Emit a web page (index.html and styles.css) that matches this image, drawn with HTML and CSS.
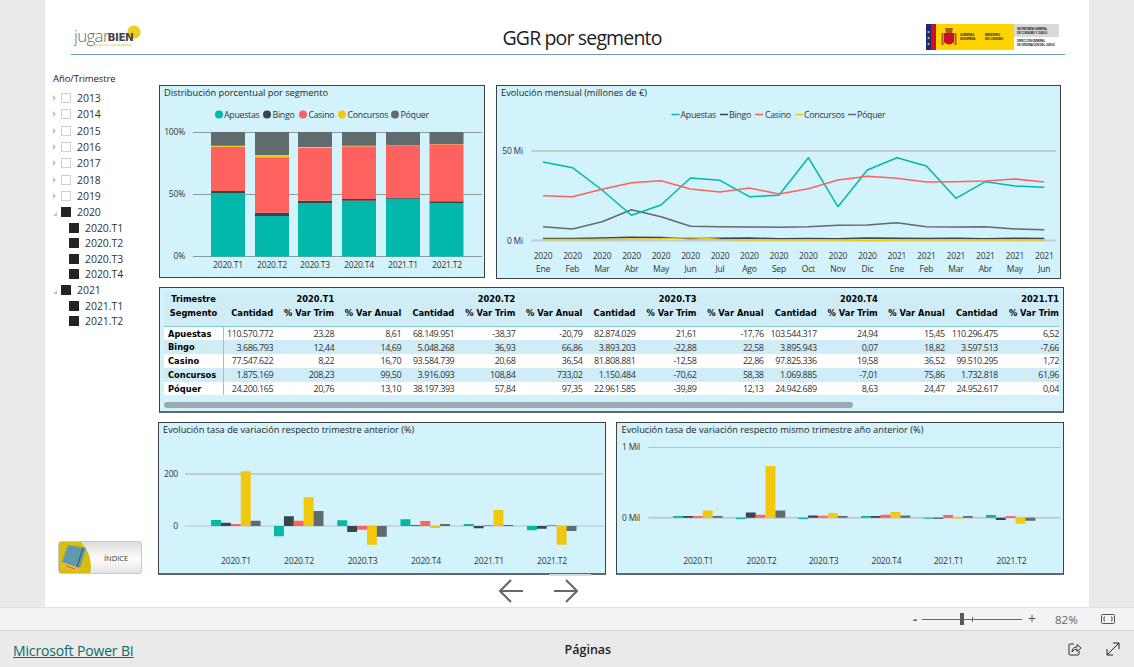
FILE: index.html
```html
<!DOCTYPE html>
<html lang="es">
<head>
<meta charset="utf-8">
<title>GGR por segmento</title>
<link rel="stylesheet" href="styles.css">
</head>
<body>
<main class="stage">
  <section class="report">
    <header class="report-head">
      <svg class="logo" viewBox="74 22 72 26" width="72" height="26" role="img" aria-label="jugarBIEN">
        <circle class="logo-dot" cx="134" cy="32" r="6.6"/>
        <text class="logo-thin" x="74" y="42">jugar</text>
        <text class="logo-bold" x="107.500" y="41">BIEN</text>
        <text class="logo-sub" x="95" y="46">juega con responsabilidad</text>
      </svg>
      <h1 class="report-title">GGR por segmento</h1>
      <svg class="gov" viewBox="926 24 133 26" width="133" height="26" role="img" aria-label="Gobierno de España">
        <rect class="gov-yellow" x="926" y="24" width="88" height="26"/>
        <rect class="gov-blue" x="926" y="24" width="5" height="26"/>
        <rect class="gov-red" x="931" y="24" width="5" height="26"/>
        <circle class="gov-star" cx="928.500" cy="32" r="1"/><circle class="gov-star" cx="928.500" cy="38" r="1"/><circle class="gov-star" cx="928.500" cy="44" r="1"/>
        <rect class="gov-grey" x="1014" y="24" width="45" height="13"/>
        <path class="gov-red" d="M944 33h10v9q-5 5-10 0z"/>
        <path class="gov-crown" d="M945 28h8l-1 5h-6zM941.500 33h2v12h-2zM954.500 33h2v12h-2z"/>
        <text class="gov-t" x="960" y="36">GOBIERNO</text><text class="gov-t" x="960" y="39.500">DE ESPAÑA</text>
        <text class="gov-t" x="985" y="36">MINISTERIO</text><text class="gov-t" x="985" y="39.500">DE CONSUMO</text>
        <text class="gov-t" x="1017" y="30">SECRETARÍA GENERAL</text><text class="gov-t" x="1017" y="33.500">DE CONSUMO Y JUEGO</text>
        <text class="gov-t" x="1017" y="42">DIRECCIÓN GENERAL</text><text class="gov-t" x="1017" y="45.500">DE ORDENACIÓN DEL JUEGO</text>
      </svg>
    </header>

    <div class="report-body">
      <aside class="side">
        <div class="slicer-title">Año/Trimestre</div>
        <ul class="slicer">
          <li class="year"><i class="caret"></i><i class="check"></i>2013</li>
          <li class="year"><i class="caret"></i><i class="check"></i>2014</li>
          <li class="year"><i class="caret"></i><i class="check"></i>2015</li>
          <li class="year"><i class="caret"></i><i class="check"></i>2016</li>
          <li class="year"><i class="caret"></i><i class="check"></i>2017</li>
          <li class="year"><i class="caret"></i><i class="check"></i>2018</li>
          <li class="year"><i class="caret"></i><i class="check"></i>2019</li>
          <li class="year"><i class="caret open"></i><i class="check on"></i>2020</li>
          <li class="quarter"><i class="check on"></i>2020.T1</li>
          <li class="quarter"><i class="check on"></i>2020.T2</li>
          <li class="quarter"><i class="check on"></i>2020.T3</li>
          <li class="quarter"><i class="check on"></i>2020.T4</li>
          <li class="year"><i class="caret open"></i><i class="check on"></i>2021</li>
          <li class="quarter"><i class="check on"></i>2021.T1</li>
          <li class="quarter"><i class="check on"></i>2021.T2</li>
        </ul>
        <button class="index-btn" type="button">
          <svg class="book" viewBox="0 0 36 32" width="36" height="32" aria-hidden="true">
            <path class="book-bg" d="M2 0h20q13 14 9 32H2q-2 0-2-2V2q0-2 2-2z"/>
            <path class="book-band" d="M3 20l18 6-1 5L2 25z"/>
            <path class="book-cover" d="M9 3l18 3-6 20-18-6z"/>
            <path class="book-spine" d="M24 6l-6 19"/>
            <path class="book-line" d="M7 24l9 3"/>
          </svg>
          <span class="index-label">ÍNDICE</span>
        </button>
      </aside>

      <div class="main">
        <div class="row-top">
          <figure class="panel panel-dist">
            <svg class="chart" viewBox="160 86 324 191">
              <text class="ttl" x="164" y="96">Distribución porcentual por segmento</text>
              <circle class="f-teal" cx="219" cy="114.500" r="4"/><text class="lbl" x="224" y="118">Apuestas</text>
              <circle class="f-dark" cx="267" cy="114.500" r="4"/><text class="lbl" x="272.500" y="118">Bingo</text>
              <circle class="f-red" cx="303" cy="114.500" r="4"/><text class="lbl" x="308.500" y="118">Casino</text>
              <circle class="f-yellow" cx="342" cy="114.500" r="4"/><text class="lbl" x="347.500" y="118">Concursos</text>
              <circle class="f-grey" cx="395" cy="114.500" r="4"/><text class="lbl" x="400.500" y="118">Póquer</text>
              <path class="grid" d="M193 132.500H482M193 194.500H482M193 256.500H482"/>
              <text class="axis end" x="185" y="135">100%</text>
              <text class="axis end" x="185" y="197">50%</text>
              <text class="axis end" x="185" y="259">0%</text>
              <path class="f-teal" d="M211 193h34v63.500h-34zM255 216h34v40.500h-34zM298 203h34v53.500h-34zM342 200.700h34v55.800h-34zM386 198.700h34v57.800h-34zM429.500 203h34v53.500h-34z"/>
              <path class="f-dark" d="M211 191h34v2h-34zM255 212.700h34v3.300h-34zM298 200.700h34v2.300h-34zM342 199h34v1.700h-34zM386 197.500h34v1.200h-34zM429.500 201.300h34v1.700h-34z"/>
              <path class="f-red" d="M211 146.700h34v44.300h-34zM255 157.300h34v55.400h-34zM298 147.700h34v53h-34zM342 146.300h34v52.700h-34zM386 146h34v51.500h-34zM429.500 144.300h34v57h-34z"/>
              <path class="f-yellow" d="M211 145.700h34v1h-34zM255 155h34v2.300h-34zM298 147h34v.7h-34zM342 145.700h34v.6h-34zM386 145.400h34v.6h-34zM429.500 144h34v.3h-34z"/>
              <path class="f-grey" d="M211 132h34v13.700h-34zM255 132h34v23h-34zM298 132h34v15h-34zM342 132h34v13.700h-34zM386 132h34v13.400h-34zM429.500 132h34v12h-34z"/>
              <text class="axis mid" x="228" y="268">2020.T1</text>
              <text class="axis mid" x="272" y="268">2020.T2</text>
              <text class="axis mid" x="315" y="268">2020.T3</text>
              <text class="axis mid" x="359" y="268">2020.T4</text>
              <text class="axis mid" x="403" y="268">2021.T1</text>
              <text class="axis mid" x="447" y="268">2021.T2</text>
            </svg>
          </figure>

          <figure class="panel panel-line">
            <svg class="chart" viewBox="497 86 563 192">
              <text class="ttl" x="501" y="96">Evolución mensual (millones de €)</text>
              <path class="l-teal" d="M671.500 114.500h8"/><text class="lbl" x="680.500" y="118">Apuestas</text>
              <path class="l-dark" d="M720 114.500h8"/><text class="lbl" x="729" y="118">Bingo</text>
              <path class="l-red" d="M755 114.500h8"/><text class="lbl" x="765" y="118">Casino</text>
              <path class="l-yellow" d="M795 114.500h8"/><text class="lbl" x="804" y="118">Concursos</text>
              <path class="l-grey" d="M848 114.500h8"/><text class="lbl" x="857" y="118">Póquer</text>
              <path class="grid-soft" d="M531 151H1056M531 240.500H1056"/>
              <text class="axis end" x="523" y="154">50 Mi</text>
              <text class="axis end" x="523" y="244">0 Mi</text>
              <polyline class="l-dark" points="543,238.500 572.500,238.500 602,238 631.500,237.300 661,237.500 690.500,238.500 720,238.300 749.400,238 778.900,238.800 808.400,238.500 837.900,238.800 867.400,238 896.900,238.200 926.400,238.500 955.900,238.300 985.400,238.700 1014.800,238.300 1044.300,238.600"/>
              <polyline class="l-yellow" points="543,239.500 572.500,239.500 602,239.500 631.500,239 661,238.800 690.500,237.500 720,239.500 749.400,240 778.900,240 808.400,240 837.900,240 867.400,240.500 896.900,240 926.400,240 955.900,240 985.400,240 1014.800,240 1044.300,240"/>
              <polyline class="l-grey" points="543,226.700 572.500,229 602,221.700 631.500,209.700 661,216.700 690.500,226.300 720,226.700 749.400,227 778.900,227.200 808.400,226.700 837.900,225.300 867.400,225 896.900,222.700 926.400,226.700 955.900,227 985.400,226.700 1014.800,229 1044.300,229.700"/>
              <polyline class="l-teal" points="543,162 572.500,167.700 602,190 631.500,215.300 661,205 690.500,178 720,180.300 749.400,196.700 778.900,195.300 808.400,157.700 837.900,206.700 867.400,170 896.900,157.700 926.400,166 955.900,198.300 985.400,181.700 1014.800,186 1044.300,187.300"/>
              <polyline class="l-red" points="543,195.700 572.500,196.700 602,189.300 631.500,182.700 661,180.700 690.500,189 720,192 749.400,188 778.900,194 808.400,188.700 837.900,180 867.400,176.300 896.900,178.300 926.400,182 955.900,181.700 985.400,181 1014.800,179 1044.300,182"/>
              <g class="axis mid">
                <text x="543" y="259">2020</text><text x="543" y="272">Ene</text>
                <text x="572.500" y="259">2020</text><text x="572.500" y="272">Feb</text>
                <text x="602" y="259">2020</text><text x="602" y="272">Mar</text>
                <text x="631.500" y="259">2020</text><text x="631.500" y="272">Abr</text>
                <text x="661" y="259">2020</text><text x="661" y="272">May</text>
                <text x="690.500" y="259">2020</text><text x="690.500" y="272">Jun</text>
                <text x="720" y="259">2020</text><text x="720" y="272">Jul</text>
                <text x="749.400" y="259">2020</text><text x="749.400" y="272">Ago</text>
                <text x="778.900" y="259">2020</text><text x="778.900" y="272">Sep</text>
                <text x="808.400" y="259">2020</text><text x="808.400" y="272">Oct</text>
                <text x="837.900" y="259">2020</text><text x="837.900" y="272">Nov</text>
                <text x="867.400" y="259">2020</text><text x="867.400" y="272">Dic</text>
                <text x="896.900" y="259">2021</text><text x="896.900" y="272">Ene</text>
                <text x="926.400" y="259">2021</text><text x="926.400" y="272">Feb</text>
                <text x="955.900" y="259">2021</text><text x="955.900" y="272">Mar</text>
                <text x="985.400" y="259">2021</text><text x="985.400" y="272">Abr</text>
                <text x="1014.800" y="259">2021</text><text x="1014.800" y="272">May</text>
                <text x="1044.300" y="259">2021</text><text x="1044.300" y="272">Jun</text>
              </g>
            </svg>
          </figure>
        </div>

        <div class="panel panel-table">
          <div class="table-clip">
            <table class="matrix">
              <colgroup>
                <col class="c-head"><col class="c1"><col class="c2"><col class="c3"><col class="c4"><col class="c5"><col class="c6"><col class="c7"><col class="c8"><col class="c9"><col class="c10"><col class="c11"><col class="c12"><col class="c13"><col class="c14">
              </colgroup>
              <thead>
                <tr class="hr1"><th class="corner">Trimestre</th><th></th><th>2020.T1</th><th></th><th></th><th>2020.T2</th><th></th><th></th><th>2020.T3</th><th></th><th></th><th>2020.T4</th><th></th><th></th><th>2021.T1</th></tr>
                <tr class="hr2"><th class="corner">Segmento</th><th>Cantidad</th><th>% Var Trim</th><th>% Var Anual</th><th>Cantidad</th><th>% Var Trim</th><th>% Var Anual</th><th>Cantidad</th><th>% Var Trim</th><th>% Var Anual</th><th>Cantidad</th><th>% Var Trim</th><th>% Var Anual</th><th>Cantidad</th><th>% Var Trim</th></tr>
              </thead>
              <tbody>
                <tr><th>Apuestas</th><td>110.570.772</td><td>23,28</td><td>8,61</td><td>68.149.951</td><td>-38,37</td><td>-20,79</td><td>82.874.029</td><td>21,61</td><td>-17,76</td><td>103.544.317</td><td>24,94</td><td>15,45</td><td>110.296.475</td><td>6,52</td></tr>
                <tr><th>Bingo</th><td>3.686.793</td><td>12,44</td><td>14,69</td><td>5.048.268</td><td>36,93</td><td>66,86</td><td>3.893.203</td><td>-22,88</td><td>22,58</td><td>3.895.943</td><td>0,07</td><td>18,82</td><td>3.597.513</td><td>-7,66</td></tr>
                <tr><th>Casino</th><td>77.547.622</td><td>8,22</td><td>16,70</td><td>93.584.739</td><td>20,68</td><td>36,54</td><td>81.808.881</td><td>-12,58</td><td>22,86</td><td>97.825.336</td><td>19,58</td><td>36,52</td><td>99.510.295</td><td>1,72</td></tr>
                <tr><th>Concursos</th><td>1.875.169</td><td>208,23</td><td>99,50</td><td>3.916.093</td><td>108,84</td><td>733,02</td><td>1.150.484</td><td>-70,62</td><td>58,38</td><td>1.069.885</td><td>-7,01</td><td>75,86</td><td>1.732.818</td><td>61,96</td></tr>
                <tr><th>Póquer</th><td>24.200.165</td><td>20,76</td><td>13,10</td><td>38.197.393</td><td>57,84</td><td>97,35</td><td>22.961.585</td><td>-39,89</td><td>12,13</td><td>24.942.689</td><td>8,63</td><td>24,47</td><td>24.952.617</td><td>0,04</td></tr>
              </tbody>
            </table>
          </div>
          <div class="scroll-track"><div class="scroll-thumb"></div></div>
        </div>

        <div class="row-bottom">
          <figure class="panel panel-bar">
            <svg class="chart" viewBox="159 423 446 150">
              <text class="ttl" x="163" y="433">Evolución tasa de variación respecto trimestre anterior (%)</text>
              <path class="grid-soft" d="M185 474H603"/>
              <path class="grid-thin" d="M185 526H603"/>
              <text class="axis end" x="178" y="477">200</text>
              <text class="axis end" x="178" y="529">0</text>
              <path class="f-teal" d="M211.100 520h9.900v6h-9.900zM274 526h9.900v10.300h-9.900zM337.300 520.300h9.900v5.700h-9.900zM400.500 519.300h9.900v6.700h-9.900zM463.800 524h9.900v2h-9.900zM527 526h9.900v4.300h-9.900z"/>
              <path class="f-dark" d="M221 522.700h9.900v3.300h-9.900zM283.900 516.300h9.900v9.700h-9.900zM347.200 526h9.900v6h-9.900zM410.400 525.300h9.900v.7h-9.900zM473.700 526h9.900v2.300h-9.900zM536.900 526h9.900v2.700h-9.900z"/>
              <path class="f-red" d="M230.900 524h9.900v2h-9.900zM293.800 520.700h9.900v5.300h-9.900zM357.100 526h9.900v3.700h-9.900zM420.300 521h9.900v5h-9.900zM483.600 525h9.900v1h-9.900zM546.800 525h9.900v1h-9.900z"/>
              <path class="f-yellow" d="M240.800 471.300h9.900v54.700h-9.900zM303.700 497.300h9.900v28.700h-9.900zM367 526h9.900v18.700h-9.900zM430.200 526h9.900v2h-9.900zM493.500 510h9.900v16h-9.900zM556.700 526h9.900v18.700h-9.900z"/>
              <path class="f-grey" d="M250.700 520.700h9.900v5.300h-9.900zM313.600 511h9.900v15h-9.900zM376.900 526h9.900v10.700h-9.900zM440.100 524h9.900v2h-9.900zM503.400 525h9.900v1h-9.900zM566.600 526h9.900v5h-9.900z"/>
              <text class="axis mid" x="236" y="564">2020.T1</text>
              <text class="axis mid" x="299" y="564">2020.T2</text>
              <text class="axis mid" x="362.600" y="564">2020.T3</text>
              <text class="axis mid" x="426" y="564">2020.T4</text>
              <text class="axis mid" x="489" y="564">2021.T1</text>
              <text class="axis mid" x="552" y="564">2021.T2</text>
            </svg>
          </figure>
          <figure class="panel panel-bar">
            <svg class="chart" viewBox="617 423 446 150">
              <text class="ttl" x="621.500" y="433">Evolución tasa de variación respecto mismo trimestre año anterior (%)</text>
              <path class="grid-thin" d="M648.400 447.500H1061"/>
              <path class="grid-soft" d="M648.400 517.700H1061"/>
              <text class="axis" x="622" y="450">1 Mil</text>
              <text class="axis" x="622" y="521">0 Mil</text>
              <path class="f-teal" d="M673.200 516h9.860v1.700h-9.860zM736 517.700h9.860v1.300h-9.860zM798.200 517.700h9.860v1.300h-9.860zM861 516h9.860v1.700h-9.860zM923.500 517.700h9.860v1h-9.860zM986 515h9.860v2.700h-9.860z"/>
              <path class="f-dark" d="M683.060 516h9.860v1.700h-9.860zM745.860 512.400h9.860v5.300h-9.860zM808.060 515.400h9.860v2.300h-9.860zM870.860 516h9.860v1.700h-9.860zM933.360 517.700h9.860v1h-9.860zM995.860 517.700h9.860v2.300h-9.860z"/>
              <path class="f-red" d="M692.920 516h9.860v1.700h-9.860zM755.720 514.700h9.860v3h-9.860zM817.920 515.700h9.860v2h-9.860zM880.720 514.700h9.860v3h-9.860zM943.220 515h9.860v2.700h-9.860zM1005.720 516h9.860v1.700h-9.860z"/>
              <path class="f-yellow" d="M702.780 510.400h9.860v7.300h-9.860zM765.580 466h9.860v51.700h-9.860zM827.780 513h9.860v4.700h-9.860zM890.580 512h9.860v5.700h-9.860zM953.080 517.700h9.860v1h-9.860zM1015.580 517.700h9.860v6h-9.860z"/>
              <path class="f-grey" d="M712.640 516h9.860v1.700h-9.860zM775.440 510.400h9.860v7.300h-9.860zM837.640 516h9.860v1.700h-9.860zM900.440 515.400h9.860v2.300h-9.860zM962.940 516h9.860v1.700h-9.860zM1025.440 517.700h9.860v3h-9.860z"/>
              <text class="axis mid" x="698.200" y="564">2020.T1</text>
              <text class="axis mid" x="761.400" y="564">2020.T2</text>
              <text class="axis mid" x="823.600" y="564">2020.T3</text>
              <text class="axis mid" x="886.400" y="564">2020.T4</text>
              <text class="axis mid" x="948.600" y="564">2021.T1</text>
              <text class="axis mid" x="1011.400" y="564">2021.T2</text>
            </svg>
          </figure>
        </div>

        <nav class="pager">
          <svg class="arrow" viewBox="0 0 24 24" width="24" height="24" aria-label="Anterior"><path d="M24 12H1M12 1L1 12l11 11"/></svg>
          <svg class="arrow" viewBox="0 0 24 24" width="24" height="24" aria-label="Siguiente"><path d="M0 12h23M12 1l11 11-11 11"/></svg>
        </nav>
      </div>
    </div>
  </section>
</main>

<div class="zoombar">
  <span class="zoom-sign">-</span>
  <span class="zoom-track"><i class="zoom-handle"></i><i class="zoom-tick"></i></span>
  <span class="zoom-sign plus">+</span>
  <span class="zoom-value">82%</span>
  <svg class="fit" viewBox="0 0 14 10" width="14" height="10" aria-hidden="true"><rect x=".5" y=".5" width="13" height="9" rx="1"/><path d="M4 3H3v4h1M10 3h1v4h-1"/></svg>
</div>

<footer class="footer">
  <a class="brand" href="#">Microsoft Power BI</a>
  <span class="pages">Páginas</span>
  <span class="foot-icons">
    <svg class="foot-icon" viewBox="0 0 14 14" width="14" height="14" aria-hidden="true"><path d="M6 2H2q-1 0-1 1v9q0 1 1 1h8q1 0 1-1V9"/><path d="M4 10q0-5 5-5V2.500L13 6 9 9.500V7q-3 0-5 3z"/></svg>
    <svg class="foot-icon dark" viewBox="0 0 14 14" width="14" height="14" aria-hidden="true"><path d="M1 13L13 1M7 1h6v6M1 7v6h6"/></svg>
  </span>
</footer>
</body>
</html>
```
FILE: styles.css
```css
* { box-sizing: border-box; }
html, body { margin: 0; padding: 0; }
body {
  width: 1134px;
  height: 667px;
  overflow: hidden;
  display: flex;
  flex-direction: column;
  background: #eaeaea;
  color: #252423;
  font-family: "Open Sans", "Noto Sans", sans-serif;
}

.stage { height: 607px; padding-left: 45px; background: #eaeaea; flex: none; }
.report { width: 1044px; height: 607px; background: #fff; display: flex; flex-direction: column; }

/* Header */
.report-head {
  height: 55px;
  margin: 0 24px 0 26px;
  padding: 0 6px 0 3px;
  border-bottom: 1px solid #6a9fb5;
  display: flex;
  justify-content: space-between;
  align-items: flex-start;
  flex: none;
}
.logo { margin-top: 22px; }
.gov { margin-top: 24px; }
.report-title {
  margin: 24px 0 0 92px;
  font-size: 19.500px;
  line-height: 28px;
  font-weight: 400;
  letter-spacing: -.85px;
  color: #1d1d1d;
}
.logo-dot { fill: #f2cd1f; }
.logo-thin { font: 300 17px "Open Sans", sans-serif; fill: #6b6b6b; letter-spacing: -.7px; }
.logo-bold { font: 700 10.500px "DejaVu Sans", sans-serif; fill: #444; letter-spacing: -.5px; }
.logo-sub { font: 400 3px "Open Sans", sans-serif; fill: #d3b100; }
.gov-yellow { fill: #ffd400; }
.gov-blue { fill: #1c2a7c; }
.gov-red { fill: #c8102e; }
.gov-star { fill: #ffd400; }
.gov-grey { fill: #d9d9d9; }
.gov-crown { fill: #a8601c; }
.gov-t { font: 700 2.800px "Liberation Sans", sans-serif; fill: #222; letter-spacing: -.12px; }

/* Body grid */
.report-body {
  flex: 1;
  display: grid;
  grid-template-columns: 106px 905px;
  padding: 17px 0 0 8px;
  min-height: 0;
}

/* Slicer */
.side { display: flex; flex-direction: column; }
.slicer-title { font-size: 9.500px; line-height: 14px; letter-spacing: -.1px; color: #252423; }
.slicer { list-style: none; margin: 4px 0 0; padding: 0; }
.year, .quarter { display: flex; align-items: center; font-size: 10.500px; color: #333; letter-spacing: -.05px; }
.year { height: 16.300px; }
.quarter { height: 15.400px; padding-left: 16px; }
.caret {
  width: 0; height: 0; margin-right: 5px; flex: none;
  border-left: 3px solid #c4c4c4;
  border-top: 3px solid transparent;
  border-bottom: 3px solid transparent;
}
.caret.open {
  border: 0;
  border-right: 4px solid #c4c4c4;
  border-top: 4px solid transparent;
  margin-right: 4px;
  margin-top: 3px;
}
.check {
  width: 10px; height: 10px; margin-right: 6px; flex: none;
  border: 1px solid #d0d0d0; background: #fff;
}
.check.on { background: #252423; border-color: #252423; }

/* Index button */
.index-btn {
  margin: auto 0 33px 5px;
  width: 84px;
  height: 33px;
  padding: 0;
  display: flex;
  align-items: center;
  border: 1px solid #c9c9c9;
  border-radius: 3px;
  background: linear-gradient(#dcdcdc, #fdfdfd 55%, #e4e4e4);
  overflow: hidden;
  font-family: inherit;
}
.book { flex: none; }
.book-bg { fill: #d9bd0c; }
.book-band { fill: #e7b93b; }
.book-cover { fill: #5e9aab; }
.book-spine { fill: none; stroke: #2c5566; stroke-width: 1; }
.book-line { fill: none; stroke: #c46a3a; stroke-width: 1; }
.index-label { margin-left: 9px; font-size: 7.500px; color: #333; }

/* Main column */
.main { display: flex; flex-direction: column; padding-top: 13px; }
.row-top { display: flex; gap: 11px; align-items: flex-start; }
.row-bottom { display: flex; gap: 10px; margin: 9px 0 0 -1px; }
.panel { margin: 0; background: #d2f2fc; border: 1px solid #3a4448; }
.panel-dist { width: 326px; height: 193px; }
.panel-line { width: 565px; height: 194px; }
.panel-bar { width: 448px; height: 153px; border-bottom-width: 2px; border-bottom-color: #5a6a70; }
.chart { display: block; width: 100%; height: 100%; }

/* Chart text & marks */
.ttl { font-size: 9.250px; fill: #252423; }
.lbl { font-size: 8.800px; fill: #333; letter-spacing: -.28px; }
.axis { font-size: 8.500px; fill: #333; letter-spacing: -.2px; }
.end { text-anchor: end; }
.mid { text-anchor: middle; }
.grid { stroke: #8f9a9e; stroke-width: 1; fill: none; }
.grid-soft { stroke: #bfcdd2; stroke-width: 2; fill: none; }
.grid-thin { stroke: #b4c1c6; stroke-width: 1; fill: none; }
.f-teal { fill: #01b8aa; }
.f-dark { fill: #374649; }
.f-red { fill: #fd625e; }
.f-yellow { fill: #f2c80f; }
.f-grey { fill: #5f6b6d; }
.l-teal, .l-dark, .l-red, .l-yellow, .l-grey { fill: none; stroke-width: 1.500; stroke-linejoin: round; }
.l-teal { stroke: #01b8aa; }
.l-dark { stroke: #374649; }
.l-red { stroke: #fd625e; }
.l-yellow { stroke: #f2c80f; }
.l-grey { stroke: #5f6b6d; }

/* Table */
.panel-table { height: 126px; margin-top: 8px; padding: 4px 4px 0; border-bottom-width: 2px; border-bottom-color: #5a6a70; }
.table-clip { width: 895px; overflow: hidden; }
.matrix { width: 898px; table-layout: fixed; border-collapse: collapse; font-size: 9px; }
.c-head { width: 59px; }
.c1, .c4, .c7, .c10, .c13 { width: 53px; }
.c2, .c5, .c8, .c11, .c14 { width: 61px; }
.c3, .c6, .c9, .c12 { width: 67px; }
.matrix th, .matrix td { padding: 0 3px 0 0; white-space: nowrap; overflow: hidden; }
.matrix thead th {
  text-align: right;
  font-family: "DejaVu Sans", sans-serif;
  font-weight: 700;
  font-size: 8.300px;
  line-height: 14px;
  color: #000;
  background: #cfecf7;
}
.matrix thead .corner { text-align: center; padding: 0; }
.hr1 th { height: 14px; }
.matrix .hr2 th { height: 20px; padding-bottom: 6px; border-bottom: 1px solid #7fcfd0; vertical-align: top; }
.matrix tbody th {
  text-align: left;
  padding-left: 4px;
  font-family: "DejaVu Sans", sans-serif;
  font-weight: 700;
  font-size: 8.300px;
  color: #000;
  border-right: 1px solid #7fcfd0;
}
.matrix tbody td { text-align: right; color: #333; letter-spacing: -.45px; }
.matrix tbody tr { height: 13.800px; background: #fff; }
.matrix tbody tr:nth-child(even) { background: #cfecf7; }
.scroll-track { width: 895px; height: 6px; margin-top: 7px; background: #dcf3fb; border-radius: 3px; }
.scroll-thumb { width: 689px; height: 6px; background: #9aa8b0; border-radius: 3px; }

/* Pager */
.pager { height: 32px; display: flex; align-items: center; gap: 31px; padding-left: 340px; position: relative; }
.pager::before { content: ""; position: absolute; left: 390px; top: -1px; width: 42px; height: 2px; background: #d9dcdd; }
.arrow path { fill: none; stroke: #666; stroke-width: 2; }

/* Zoom bar */
.zoombar {
  height: 24px;
  flex: none;
  display: flex;
  align-items: center;
  padding-left: 913px;
  background: #f3f3f3;
  border-top: 1px solid #e0e0e0;
  border-bottom: 1px solid #d0d0d0;
  color: #555;
}
.zoom-sign { width: 5px; font-size: 13px; font-weight: 700; line-height: 1; }
.zoom-sign.plus { width: 9px; margin-left: 6px; font-weight: 400; font-size: 14px; }
.zoom-track { width: 100px; height: 1px; margin-left: 4px; background: #666; position: relative; }
.zoom-handle { position: absolute; left: 38px; top: -6px; width: 4px; height: 12px; background: #5a5a5a; }
.zoom-tick { position: absolute; left: 50px; top: -2px; width: 1px; height: 5px; background: #666; }
.zoom-value { margin-left: 18px; font-size: 11.500px; color: #666; }
.fit { margin-left: 23px; }
.fit rect, .fit path { fill: none; stroke: #555; stroke-width: 1; }

/* Footer */
.footer { flex: 1; display: flex; align-items: center; padding: 2px 14px 0 13px; }
.brand { font-size: 14px; color: #0b6a6a; text-decoration: underline; letter-spacing: -.15px; }
.pages { margin-left: 431px; margin-top: -2px; font-size: 12.500px; font-weight: 600; color: #1d1d1d; }
.foot-icons { margin-left: auto; margin-top: -2px; display: flex; gap: 24px; }
.foot-icon path { fill: none; stroke: #333; stroke-width: 1; }
.foot-icon.dark path { stroke: #241a2e; }
```
